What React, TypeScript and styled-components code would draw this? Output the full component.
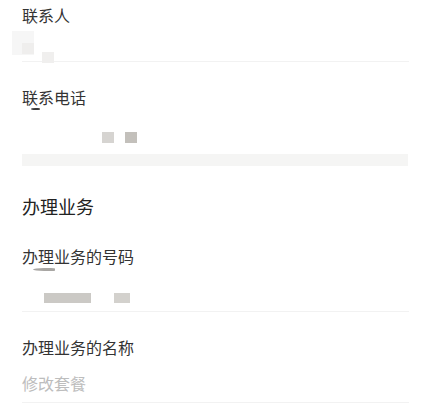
import React from "react";
import styled, { createGlobalStyle } from "styled-components";

const GlobalStyle = createGlobalStyle`
  html, body {
    margin: 0;
    padding: 0;
    background: #ffffff;
  }
  body {
    font-family: "Noto Sans CJK SC", "Noto Sans", sans-serif;
    color: #333333;
  }
`;

const Page = styled.div`
  width: 429px;
  height: 415px;
  overflow: hidden;
  background: #ffffff;
`;

const Field = styled.div<{ $top: number; $line?: boolean }>`
  margin: 0 20px 0 22px;
  padding-top: ${(p) => p.$top}px;
  border-bottom: ${(p) => (p.$line ? "1px solid #f2f2f2" : "none")};
`;

const Label = styled.div`
  font-size: 16px;
  line-height: 24px;
  color: #333333;
`;

const Value = styled.div<{ $height: number; $pad?: number }>`
  height: ${(p) => p.$height}px;
  box-sizing: border-box;
  padding-top: ${(p) => p.$pad ?? 0}px;
  display: flex;
  align-items: flex-start;
`;

const Placeholder = styled.div`
  font-size: 16px;
  line-height: 24px;
  color: #bdbdbd;
`;

/* mosaic marks left over from the redacted screenshot */
const Mark = styled.div<{
  $w: number;
  $h: number;
  $color: string;
  $left: number;
  $top?: number;
  $round?: boolean;
}>`
  flex: none;
  width: ${(p) => p.$w}px;
  height: ${(p) => p.$h}px;
  margin-left: ${(p) => p.$left}px;
  margin-top: ${(p) => p.$top ?? 0}px;
  background: ${(p) => p.$color};
  border-radius: ${(p) => (p.$round ? "50% 20% 20% 50%" : "0")};
`;

const Separator = styled.div`
  height: 12px;
  margin: 0 21px 0 22px;
  background: #f5f5f4;
`;

const SectionTitle = styled.div`
  margin-left: 22px;
  padding-top: 27px;
  font-size: 18px;
  line-height: 26px;
  color: #222222;
`;

export default function App() {
  return (
    <Page>
      <GlobalStyle />
      <Field $top={3} $line>
        <Label>联系人</Label>
        <Value $height={34} $pad={4}>
          <Mark $w={22} $h={24} $color="#f6f6f6" $left={-10} />
          <Mark $w={12} $h={11} $color="#efeeed" $left={-12} $top={12} />
          <Mark $w={12} $h={11} $color="#f0efee" $left={8} $top={21} />
        </Value>
      </Field>
      <Field $top={23}>
        <Label>联系电话</Label>
        <Value $height={45}>
          <Mark $w={9} $h={2} $color="#3a3a3a" $left={9} $top={-1} $round />
          <Mark $w={12} $h={11} $color="#d6d4d1" $left={62} $top={23} />
          <Mark $w={12} $h={11} $color="#c3c0bb" $left={11} $top={23} />
        </Value>
      </Field>
      <Separator />
      <SectionTitle>办理业务</SectionTitle>
      <Field $top={25} $line>
        <Label>办理业务的号码</Label>
        <Value $height={43}>
          <Mark $w={22} $h={3} $color="#a8a6a3" $left={11} $top={0} $round />
          <Mark $w={47} $h={10} $color="#cbc9c5" $left={-11} $top={25} />
          <Mark $w={16} $h={10} $color="#d3d1cd" $left={23} $top={25} />
        </Value>
      </Field>
      <Field $top={23} $line>
        <Label>办理业务的名称</Label>
        <Value $height={43} $pad={12}>
          <Placeholder>修改套餐</Placeholder>
        </Value>
      </Field>
    </Page>
  );
}
